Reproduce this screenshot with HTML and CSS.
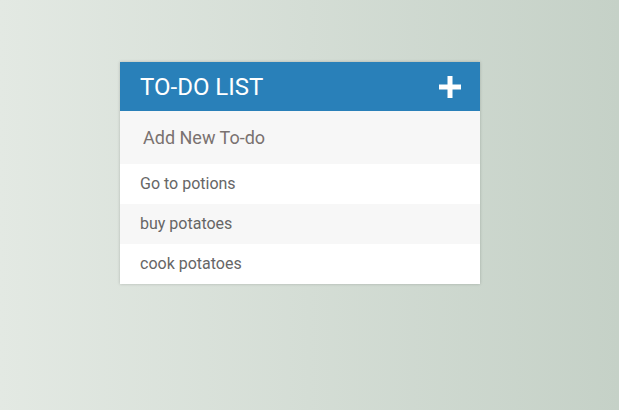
FILE: index.html
```html
<!DOCTYPE html>
<html>
<head>
<meta charset="utf-8">
<link rel="stylesheet" href="styles.css">
</head>
<body>
<div class="container">
  <h1 class="title">To-do List <span class="add"><svg width="22" height="22" viewBox="0 0 22 22"><rect x="8.5" y="0" width="5" height="22" fill="#fff"/><rect x="0" y="8.5" width="22" height="5" fill="#fff"/></svg></span></h1>
  <input class="new-todo" type="text" placeholder="Add New To-do">
  <ul class="list">
    <li>Go to potions</li>
    <li>buy potatoes</li>
    <li>cook potatoes</li>
  </ul>
</div>
</body>
</html>
```
FILE: styles.css
```css
html, body {
  height: 100%;
}
body {
  margin: 0;
  font-family: Roboto, "Liberation Sans", sans-serif;
  background: linear-gradient(to left, #c5d1c7, #e3e9e3);
  padding: 62px 0 0 120px;
  box-sizing: border-box;
}
.container {
  width: 360px;
  background: #f7f7f7;
  box-shadow: 0 0 3px rgba(0, 0, 0, 0.2);
}
.title {
  margin: 0;
  background: #2980b9;
  color: #fff;
  text-transform: uppercase;
  font-size: 24px;
  font-weight: normal;
  height: 49px;
  padding: 0 19px 0 20px;
  display: flex;
  align-items: center;
  justify-content: space-between;
}
.add {
  display: flex;
}
.new-todo {
  display: block;
  width: 100%;
  box-sizing: border-box;
  font-family: Roboto, "Liberation Sans", sans-serif;
  font-size: 18px;
  background: #f7f7f7;
  padding: 13px 13px 13px 20px;
  border: 3px solid rgba(0, 0, 0, 0);
  height: 53px;
  outline: none;
  color: #2980b9;
}
.new-todo::placeholder {
  color: #7a7270;
}
.list {
  list-style: none;
  margin: 0;
  padding: 0;
}
.list li {
  background: #fff;
  height: 40px;
  line-height: 40px;
  color: #666;
  padding-left: 20px;
  font-size: 16px;
}
.list li:nth-child(2n) {
  background: #f7f7f7;
}
```
